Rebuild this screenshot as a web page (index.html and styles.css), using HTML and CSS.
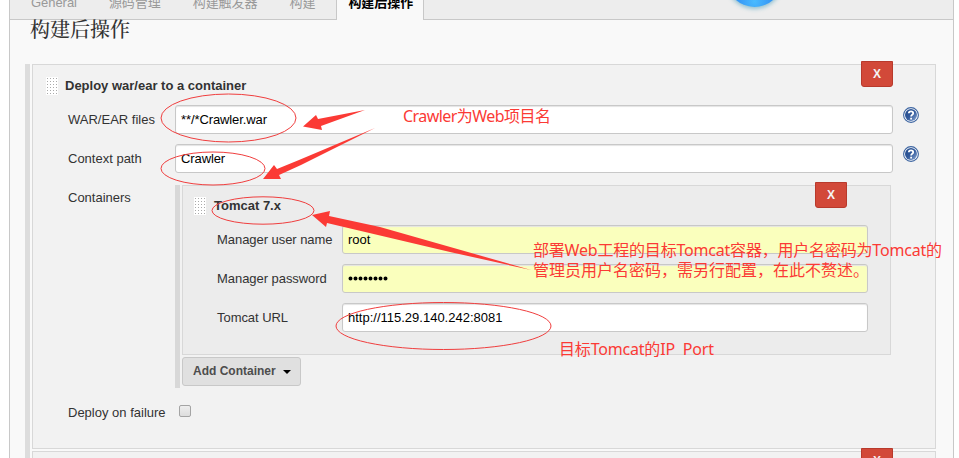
FILE: index.html
```html
<!DOCTYPE html>
<html lang="zh-CN">
<head>
<meta charset="utf-8">
<title>构建后操作</title>
<link rel="stylesheet" href="styles.css">
</head>
<body>
<main class="panel">
  <nav class="tabs">
    <a class="tab">General</a><a class="tab">源码管理</a><a class="tab">构建触发器</a><a class="tab">构建</a><a class="tab active">构建后操作</a>
  </nav>
  <h1 class="title">构建后操作</h1>
  <div class="section">
    <section class="box">
      <button class="remove">X</button>
      <header class="head"><i class="grip"></i><b>Deploy war/ear to a container</b></header>
      <div class="row"><label>WAR/EAR files</label><div class="input">**/*Crawler.war</div>
        <svg class="help" viewBox="0 0 16 16"><use href="#help"/></svg></div>
      <div class="row"><label>Context path</label><div class="input">Crawler</div>
        <svg class="help" viewBox="0 0 16 16"><use href="#help"/></svg></div>
      <div class="row containers"><label>Containers</label>
        <div class="nested">
          <section class="inner">
            <button class="remove">X</button>
            <header class="head"><i class="grip"></i><b>Tomcat 7.x</b></header>
            <div class="row"><label>Manager user name</label><div class="input filled">root</div></div>
            <div class="row"><label>Manager password</label><div class="input filled"><svg class="dots" viewBox="0 0 40 5"><path d="M2.5 2.5h35.1"/></svg></div></div>
            <div class="row"><label>Tomcat URL</label><div class="input">http://115.29.140.242:8081</div></div>
          </section>
          <button class="add">Add Container<i class="caret"></i></button>
        </div>
      </div>
      <div class="row failure"><label>Deploy on failure</label><span class="check"></span></div>
    </section>
    <section class="box next"><button class="remove">X</button></section>
  </div>
</main>
<svg class="notes" width="959" height="458" viewBox="0 0 959 458">
  <defs>
    <radialGradient id="ball" cx=".5" cy=".9" r=".55"><stop offset="0" stop-color="#48bbff"/><stop offset="1" stop-color="#2478ee"/></radialGradient>
    <linearGradient id="blue" x1="0" y1="0" x2="1" y2="1"><stop offset="0" stop-color="#244c8c"/><stop offset=".5" stop-color="#31599b"/><stop offset="1" stop-color="#8eaad4"/></linearGradient>
    <filter id="soft" x="-30%" y="-30%" width="160%" height="160%"><feGaussianBlur stdDeviation="2"/></filter>
    <symbol id="help" viewBox="0 0 16 16">
      <circle cx="8" cy="8" r="7.4" fill="#fff" stroke="#3c64a0" stroke-width="1.1"/>
      <circle cx="8" cy="8" r="6" fill="url(#blue)"/>
      <path d="M5.8 6.3C5.8 3.6 10.2 3.7 10.2 6.2C10.2 7.8 8.1 7.7 8.1 9.5M8.1 10.8v1.7" fill="none" stroke="#fff" stroke-width="1.8"/>
    </symbol>
  </defs>
  <circle cx="754.500" cy="-19" r="28" fill="#3d9aba" opacity=".55" filter="url(#soft)"/>
  <circle cx="754.500" cy="-21" r="28" fill="url(#ball)"/>
  <g class="rings">
    <ellipse cx="228.500" cy="118" rx="67.500" ry="24"/>
    <ellipse cx="213" cy="168.500" rx="52" ry="16.500"/>
    <ellipse cx="263" cy="210.500" rx="51" ry="13.700"/>
    <ellipse cx="443.500" cy="326" rx="107.500" ry="23.500"/>
  </g>
  <g class="arrows">
    <path d="M303 126.500L316 115L318 119L365 110L321 126L322 130Z"/>
    <path d="M263 179L274 165L277 169L299 160L375 128L301 165L279 175L281 179Z"/>
    <path d="M312 215L330 211L329 216L380 227L531 270L450 252L327 223L326 227Z"/>
  </g>
  <g class="words">
    <text x="403" y="122" textLength="148">Crawler为Web项目名</text>
    <text x="533" y="256" textLength="409">部署Web工程的目标Tomcat容器，用户名密码为Tomcat的</text>
    <text x="533" y="276" textLength="336">管理员用户名密码，需另行配置，在此不赘述。</text>
    <text x="559" y="355" textLength="155" xml:space="preserve">目标Tomcat的IP  Port</text>
  </g>
</svg>
</body>
</html>
```
FILE: styles.css
```css
* { box-sizing: border-box; }
body {
  margin: 0;
  height: 458px;
  overflow: hidden;
  position: relative;
  background: #fff;
  color: #333;
  font: 13px/18px "Liberation Sans", "Noto Sans CJK SC", sans-serif;
}
.panel {
  width: 945px;
  height: 458px;
  margin-left: 9px;
  overflow: hidden;
  background: #f9f9f9;
  border: solid #c8c8c8;
  border-width: 0 1px;
}
.tabs {
  display: flex;
  height: 20px;
  padding-left: 5px;
  background: #ededed;
  border-bottom: 1px solid #c8c8c8;
}
.tab {
  height: 19px;
  padding: 0 16px;
  line-height: 5px;
  letter-spacing: -0.05px;
  color: #999;
  white-space: nowrap;
}
.tab.active {
  height: 20px;
  margin-left: 5px;
  padding: 0 10px 0 11px;
  background: #f9f9f9;
  border: solid #c8c8c8;
  border-width: 0 1px;
  color: #000;
  font-weight: bold;
}
.title {
  height: 44px;
  margin: 0 0 0 20px;
  font: 500 20px/18px "Noto Serif CJK SC", "Noto Sans CJK SC", serif;
}
.section {
  width: 911px;
  height: 394px;
  margin-left: 15px;
  padding-left: 2px;
  border-left: 5px solid #ddd;
}
.box, .inner {
  position: relative;
  border: 1px solid #d8d8d8;
  background: #f2f2f2;
}
.box { height: 385px; padding-top: 12px; }
.next { height: 20px; margin-top: 2px; }
.head { display: flex; height: 28px; padding-left: 13px; gap: 7px; }
.head b { line-height: 17px; }
.inner .head { gap: 8px; }
.grip {
  width: 12px;
  height: 18px;
  background: radial-gradient(circle at 1.5px 1.5px, #aaa 0 0.7px, #fff 1px) 0 0 / 3px 3px;
}
.row { display: flex; height: 39px; }
.row label { flex: none; width: 107px; line-height: 30px; }
.box > .row { padding-left: 35px; }
.input {
  width: 718px;
  height: 29px;
  padding: 5px;
  background: #fff;
  border: 1px solid #c8c8c8;
  border-radius: 3px;
  box-shadow: inset 0 1px 1px #e4e4e4;
  color: #000;
}
.box > .row > .input { letter-spacing: -0.1px; }
.filled { background: #faffbd; }
.help { width: 16px; height: 16px; margin: 2px 0 0 10px; }
.dots { display: block; width: 40px; height: 5px; margin-top: 6px; }
.dots path { fill: none; stroke: #000; stroke-width: 4; stroke-linecap: round; stroke-dasharray: 0 5; }
.row.containers { height: 218px; padding-top: 2px; }
.containers > label { line-height: 25px; }
.nested {
  width: 716px;
  height: 203px;
  padding-left: 2px;
  border-left: 5px solid #d8d8d8;
}
.inner { height: 170px; padding-top: 11px; background: #ececec; }
.inner .head { padding-left: 11px; }
.inner .row { padding-left: 34px; }
.inner .row label { width: 125px; letter-spacing: -0.05px; }
.inner .input { width: 526px; }
.remove {
  position: absolute;
  top: -4px;
  right: 42px;
  width: 32px;
  height: 26px;
  padding: 0;
  background: #d24939;
  border: 1px solid #b83a2c;
  border-radius: 0 0 3px 3px;
  color: #f4f4f4;
  font: bold 12px/24px "Liberation Sans", sans-serif;
}
.inner .remove { right: 43px; }
.add {
  display: flex;
  width: 119px;
  height: 29px;
  margin-top: 2px;
  padding: 0 9px 1px 10px;
  align-items: center;
  justify-content: space-between;
  background: #e0e0e0;
  border: 1px solid #c8c8c8;
  border-radius: 3px;
  color: #4d4d4d;
  font: bold 12px "Liberation Sans", sans-serif;
}
.caret {
  margin-top: 2px;
  border: solid transparent;
  border-width: 4px 4px 0;
  border-top-color: #000;
}
.row.failure label { line-height: 24px; }
.check {
  width: 12px;
  height: 12px;
  margin: 4px 0 0 4px;
  background: linear-gradient(#eee, #ddd);
  border: 1px solid #a4a4a4;
  border-radius: 2px;
}
.notes { position: absolute; top: 0; left: 0; }
.rings { fill: none; stroke: #f03e3e; stroke-width: 1; }
.arrows, .words { fill: #fb3a35; }
.words { font: 400 16px "Noto Sans", "Noto Sans CJK SC", sans-serif; }
```
